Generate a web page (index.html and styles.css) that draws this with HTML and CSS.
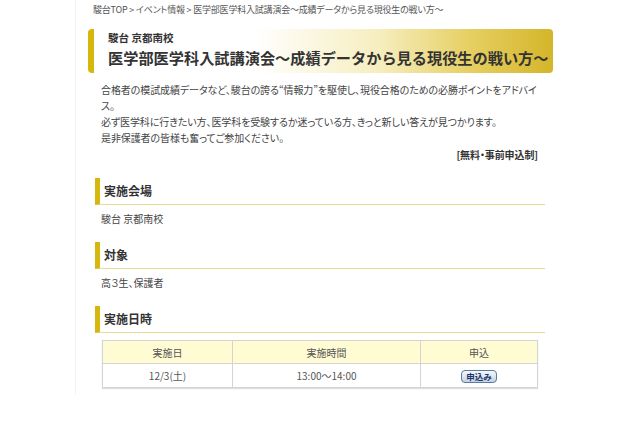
FILE: index.html
```html
<!DOCTYPE html>
<html lang="ja">
<head>
    <meta charset="UTF-8">
    <title>医学部医学科入試講演会～成績データから見る現役生の戦い方～</title>
    <link rel="stylesheet" href="styles.css">
</head>
<body>
    <div class="page">
        <p class="crumbs">駿台TOP &gt; イベント情報 &gt; 医学部医学科入試講演会～成績データから見る現役生の戦い方～</p>

        <div class="banner">
            <p class="school">駿台 京都南校</p>
            <h1>医学部医学科入試講演会～成績データから見る現役生の戦い方～</h1>
        </div>

        <div class="intro">
            <p>合格者の模試成績データなど、駿台の誇る“情報力”を駆使し、現役合格のための必勝ポイントをアドバイス。<br>
            必ず医学科に行きたい方、医学科を受験するか迷っている方、きっと新しい答えが見つかります。<br>
            是非保護者の皆様も奮ってご参加ください。</p>
            <p class="free">[無料・事前申込制]</p>
        </div>

        <h2 class="sec">実施会場</h2>
        <p class="sec-body">駿台 京都南校</p>

        <h2 class="sec">対象</h2>
        <p class="sec-body">高３生、保護者</p>

        <h2 class="sec">実施日時</h2>
        <table class="sched">
            <tr>
                <th class="c-date">実施日</th>
                <th class="c-time">実施時間</th>
                <th class="c-apply">申込</th>
            </tr>
            <tr>
                <td>12/3(土)</td>
                <td>13:00～14:00</td>
                <td><a class="apply-btn" href="#">申込み</a></td>
            </tr>
        </table>
    </div>
</body>
</html>
```

FILE: styles.css
```css
body {
    margin: 0;
    background: #fff;
    font-family: "Noto Sans CJK JP", "Noto Sans", sans-serif;
    color: #444;
}
p {
    margin: 0;
}
.page {
    width: 465px;
    min-height: 392px;
    margin-left: 75px;
    padding: 3px 0 0 12px;
    border-left: 1px solid #f3f3f3;
}
.crumbs {
    padding-left: 5px;
    font-size: 9px;
    letter-spacing: -0.2px;
    line-height: 14px;
    color: #555;
    font-feature-settings: "palt";
    white-space: nowrap;
}
.banner {
    margin-top: 12px;
    height: 44px;
    padding: 2px 0 0 14px;
    box-sizing: border-box;
    border-left: 6px solid #d6b80c;
    border-radius: 4px;
    background: linear-gradient(to right, #fff 35%, #f6eebf 62%, #e6cf62 82%, #d4b52a 100%);
}
.school {
    font-size: 10.5px;
    font-weight: bold;
    line-height: 14px;
    color: #333;
}
h1 {
    margin: 2px 0 0;
    font-size: 15.2px;
    line-height: 20px;
    color: #333;
    white-space: nowrap;
}
.intro {
    margin-top: 9px;
    padding: 0 15px 0 13px;
    font-size: 10px;
    line-height: 16px;
    letter-spacing: -0.1px;
    font-feature-settings: "palt";
}
.free {
    margin-top: 1px;
    text-align: right;
    font-weight: bold;
    color: #333;
}
.sec {
    margin: 15px 8px 0 7px;
    padding-left: 4px;
    border-left: 5px solid #d6b80c;
    border-bottom: 1px solid #e6dc98;
    font-size: 12px;
    line-height: 25px;
    padding-bottom: 1px;
    color: #333;
}
.sec-body {
    margin: 6px 0 0 13px;
    font-size: 10px;
    line-height: 16px;
    font-feature-settings: "palt";
}
.sched {
    margin: 7px 0 0 14px;
    width: 436px;
    border-collapse: collapse;
    border: 1px solid #c8c8c8;
    box-shadow: 0 1px 1px #ddd;
    font-size: 10px;
    color: #555;
}
.sched th,
.sched td {
    border: 1px solid #d4d4d4;
    text-align: center;
    font-weight: normal;
    padding: 0;
}
.sched th {
    height: 22px;
    background: #fffbd3;
}
.sched td {
    height: 23px;
}
.c-date {
    width: 129px;
}
.c-time {
    width: 187px;
}
.apply-btn {
    display: inline-block;
    padding: 0 4px;
    height: 11px;
    line-height: 11px;
    border: 1px solid #5c7ba3;
    border-radius: 4px;
    background: linear-gradient(#f6f8fb, #c4d2e3);
    font-size: 8.5px;
    font-weight: bold;
    color: #1c3767;
    text-decoration: none;
    vertical-align: middle;
}
```
